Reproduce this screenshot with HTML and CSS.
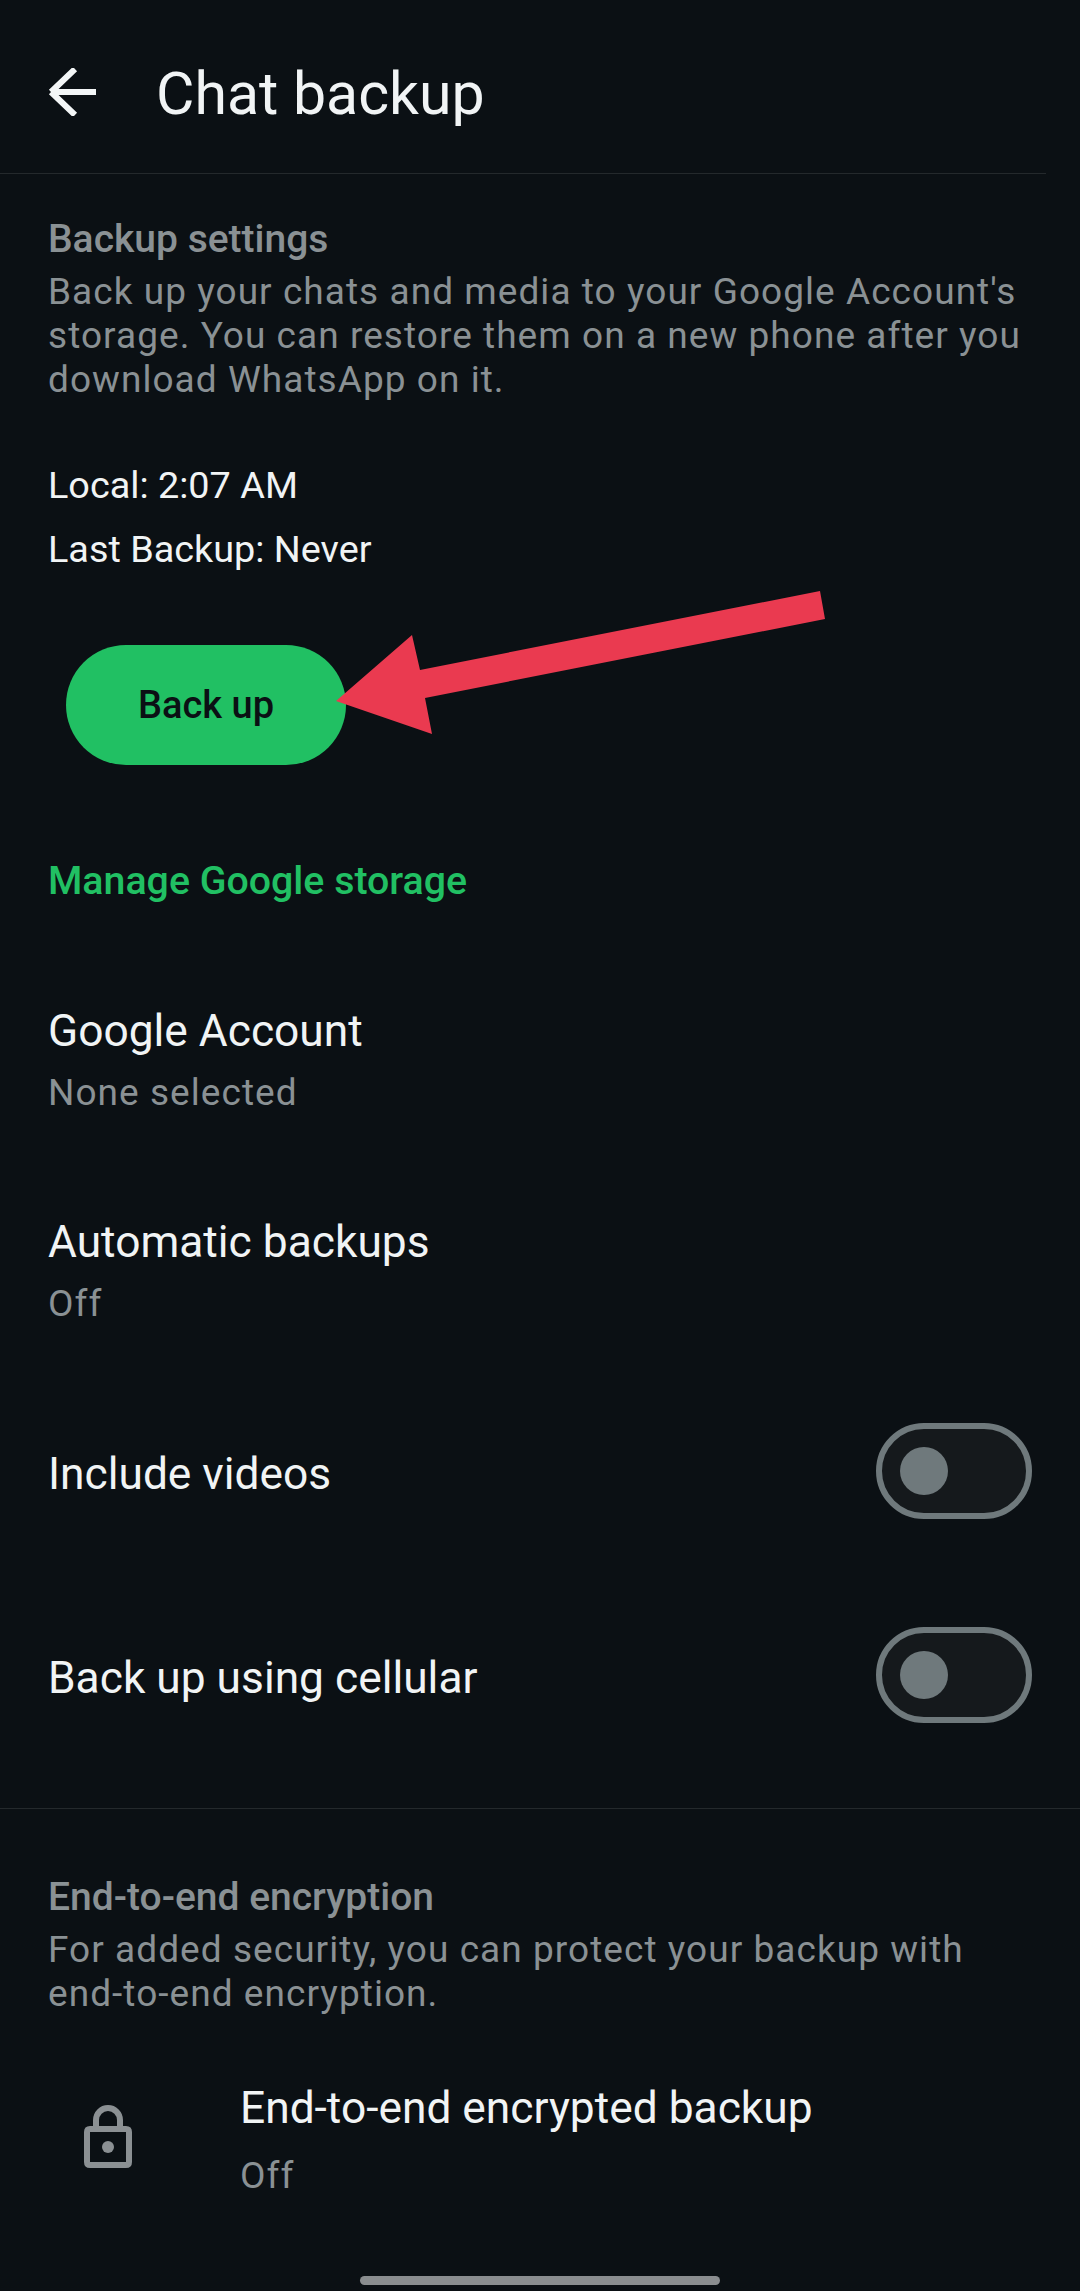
FILE: index.html
```html
<!DOCTYPE html>
<html lang="en">
<head>
    <meta charset="UTF-8">
    <meta name="viewport" content="width=device-width, initial-scale=1.0">
    <title>Chat backup</title>
    <link rel="stylesheet" href="styles.css">
</head>
<body>
    <header class="app-bar">
        <svg class="back-icon" viewBox="0 0 48 48" aria-hidden="true">
            <path d="M48 24H3M3 24L27 1M3 24L27 47" fill="none" stroke="#f3f6f7" stroke-width="6"/>
        </svg>
        <h1>Chat backup</h1>
    </header>

    <section class="backup-settings">
        <h2>Backup settings</h2>
        <p class="desc">Back up your chats and media to your Google Account's storage. You can restore them on a new phone after you download WhatsApp on it.</p>
        <p class="info info-local">Local: 2:07 AM</p>
        <p class="info info-last">Last Backup: Never</p>
        <button class="backup-btn">Back up</button>
        <a class="manage-link">Manage Google storage</a>
    </section>

    <div class="setting setting-account">
        <div class="setting-title">Google Account</div>
        <div class="setting-sub">None selected</div>
    </div>
    <div class="setting setting-auto">
        <div class="setting-title">Automatic backups</div>
        <div class="setting-sub">Off</div>
    </div>
    <div class="toggle-row toggle-videos">
        <span class="setting-title toggle-label">Include videos</span>
        <span class="switch"><span class="thumb"></span></span>
    </div>
    <div class="toggle-row toggle-cellular">
        <span class="setting-title toggle-label">Back up using cellular</span>
        <span class="switch"><span class="thumb"></span></span>
    </div>

    <section class="encryption">
        <h2>End-to-end encryption</h2>
        <p class="desc">For added security, you can protect your backup with <span class="nowrap">end-to-end</span> encryption.</p>
        <div class="encrypted-row">
            <svg class="lock-icon" viewBox="0 0 48 63" aria-hidden="true">
                <path d="M6 24H42Q45 24 45 27V57Q45 60 42 60H6Q3 60 3 57V27Q3 24 6 24Z" fill="none" stroke="#8b9093" stroke-width="6"/>
                <path d="M12 24V15A12 12 0 0 1 36 15V24" fill="none" stroke="#8b9093" stroke-width="6"/>
                <circle cx="24" cy="42" r="6" fill="#8b9093"/>
            </svg>
            <div>
                <div class="setting-title">End-to-end encrypted backup</div>
                <div class="setting-sub encrypted-sub">Off</div>
            </div>
        </div>
    </section>

    <div class="home-bar"></div>

    <svg class="arrow" viewBox="0 0 1080 2291" aria-hidden="true">
        <polygon points="336,701 412,635 420,670 820,591 825,619 425,698 432,734" fill="#ea3a50"/>
    </svg>
</body>
</html>
```

FILE: styles.css
```css
html, body {
    margin: 0;
    padding: 0;
}
body {
    position: relative;
    width: 1080px;
    height: 2291px;
    overflow: hidden;
    background-color: #0b1014;
    color: #f1f4f5;
    font-family: Roboto, "Liberation Sans", sans-serif;
}
h1, h2, p {
    margin: 0;
    font-weight: normal;
}
.nowrap {
    white-space: nowrap;
}
.app-bar {
    display: flex;
    align-items: center;
    height: 174px;
    width: 1046px;
    padding: 10px 0 0 48px;
    box-sizing: border-box;
    border-bottom: 1px solid #24292c;
}
.back-icon {
    width: 48px;
    height: 48px;
    margin-right: 60px;
}
h1 {
    margin-top: 4px;
    font-size: 59px;
    line-height: 66px;
}
h2 {
    margin-bottom: 5px;
    font-size: 39px;
    line-height: 52px;
    font-weight: 500;
    color: #8a9194;
}
.desc {
    font-size: 37px;
    line-height: 44px;
    letter-spacing: 1.05px;
    color: #8a9194;
}
.backup-settings {
    padding: 39px 32px 0 48px;
}
.info {
    font-size: 37.8px;
    line-height: 44px;
}
.info-local {
    margin-top: 61px;
}
.info-last {
    margin-top: 20px;
}
.backup-btn {
    display: block;
    width: 280px;
    height: 120px;
    margin: 74px 0 0 18px;
    border: none;
    border-radius: 60px;
    background-color: #21c063;
    color: #0b1014;
    font-family: inherit;
    font-size: 38px;
    font-weight: 500;
}
.manage-link {
    display: block;
    margin-top: 94px;
    font-size: 39.3px;
    line-height: 44px;
    font-weight: 500;
    color: #21c063;
}
.setting {
    padding-left: 48px;
}
.setting-account {
    margin-top: 103px;
}
.setting-auto {
    margin-top: 102px;
}
.setting-title {
    font-size: 44.3px;
    line-height: 50px;
}
.setting-sub {
    margin-top: 15px;
    font-size: 37px;
    line-height: 44px;
    letter-spacing: 1.05px;
    color: #8a9194;
}
.encrypted-sub {
    margin-top: 21px;
}
.toggle-row {
    display: flex;
    align-items: center;
    justify-content: space-between;
    padding: 0 48px;
    height: 96px;
}
.toggle-label {
    padding-top: 6px;
}
.toggle-videos {
    margin-top: 97px;
}
.toggle-cellular {
    margin-top: 108px;
}
.switch {
    display: flex;
    align-items: center;
    box-sizing: border-box;
    width: 156px;
    height: 96px;
    padding-left: 18px;
    border: 6px solid #6f797c;
    border-radius: 48px;
    background-color: #15191c;
}
.thumb {
    width: 48px;
    height: 48px;
    border-radius: 50%;
    background-color: #6f797c;
}
.encryption {
    margin-top: 85px;
    padding: 62px 48px 0;
    border-top: 1px solid #24292c;
}
.encrypted-row {
    display: flex;
    align-items: center;
    margin-top: 67px;
}
.lock-icon {
    width: 48px;
    height: 63px;
    margin: 0 108px 9px 36px;
}
.home-bar {
    position: absolute;
    left: 360px;
    top: 2276px;
    width: 360px;
    height: 9px;
    border-radius: 5px;
    background-color: #8a8d8f;
}
.arrow {
    position: absolute;
    left: 0;
    top: 0;
    width: 1080px;
    height: 2291px;
    pointer-events: none;
}
```
